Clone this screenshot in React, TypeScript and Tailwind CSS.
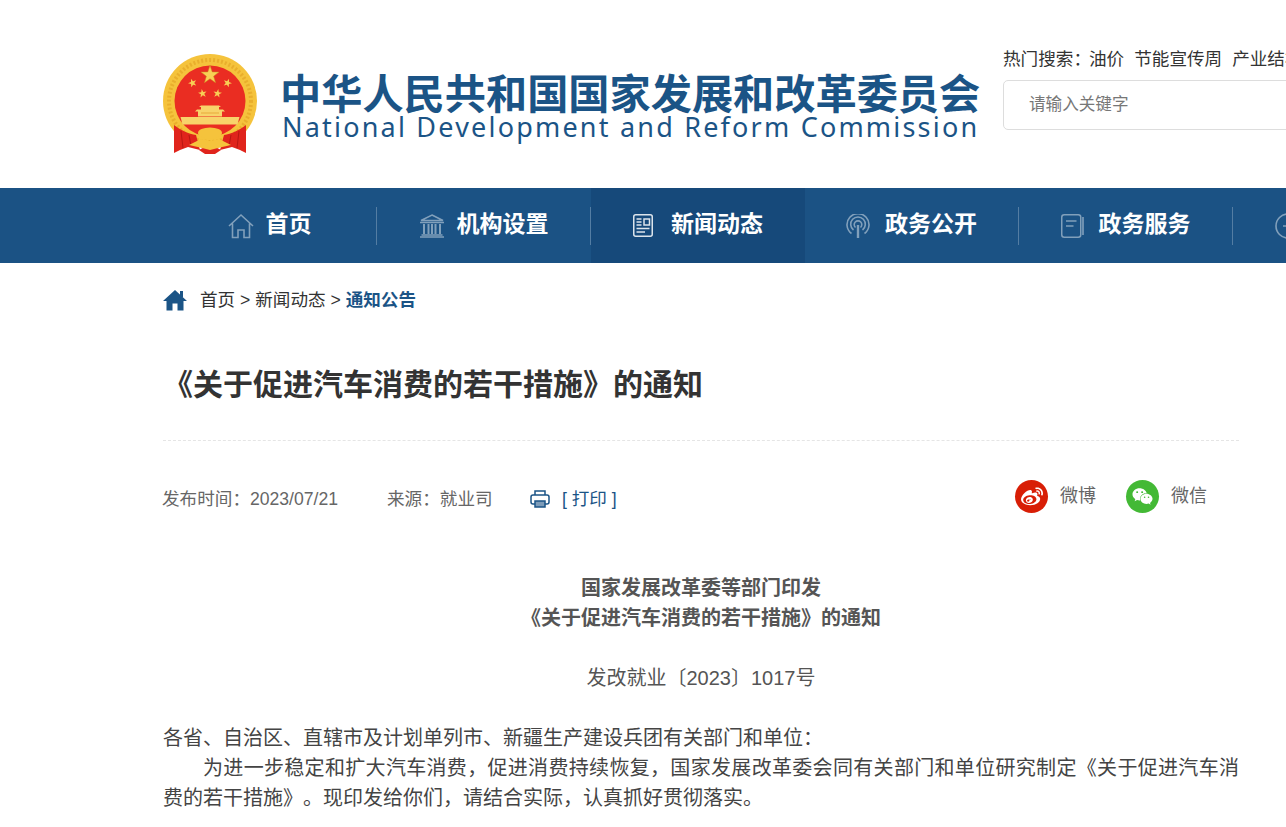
import React from 'react';
import { FaWeibo, FaWeixin } from 'react-icons/fa';

const FONT = '[font-family:"Liberation_Sans","Noto_Sans_CJK_SC",sans-serif]';

const star = (cx: number, cy: number, r: number, rot = 0) => {
  const pts: string[] = [];
  for (let i = 0; i < 10; i++) {
    const rad = i % 2 === 0 ? r : r * 0.4;
    const a = ((-90 + rot + i * 36) * Math.PI) / 180;
    pts.push(`${(cx + rad * Math.cos(a)).toFixed(2)},${(cy + rad * Math.sin(a)).toFixed(2)}`);
  }
  return pts.join(' ');
};

const Emblem = () => (
  <svg width="94" height="100" viewBox="0 0 94 100" className="shrink-0">
    <circle cx="47" cy="47" r="47" fill="#f5c33c" />
    <circle cx="47" cy="47" r="41" fill="none" stroke="#e9ae2c" strokeWidth="4" strokeDasharray="2 2" />
    <circle cx="47" cy="47" r="35.5" fill="#ea2d22" />
    <polygon points={star(47, 21, 9.5)} fill="#f8cf55" stroke="#c98a1f" strokeWidth="0.5" />
    <polygon points={star(29.5, 29, 4.5, -20)} fill="#f8cf55" />
    <polygon points={star(64.5, 29, 4.5, 20)} fill="#f8cf55" />
    <polygon points={star(39.5, 39.5, 4.5, -10)} fill="#f8cf55" />
    <polygon points={star(54.5, 39.5, 4.5, 10)} fill="#f8cf55" />
    <path d="M36 53 L38 51.5 H56 L58 53 H56 V55.5 H60 L62 57.5 H59 V62.5 H35 V57.5 H32 L34 55.5 H38 V53 Z" fill="#f8d36a" />
    <path d="M38 59 H56" stroke="#e8a93a" strokeWidth="1" />
    <path d="M17.5 63 H76.5 L74.5 70.5 H19.5 Z" fill="#f8d36a" />
    <path d="M11 71 C17 76 26 80 33 81 L37 96 L25 93 L17 96 L11 99 Z" fill="#e0241c" />
    <path d="M83 71 C77 76 68 80 61 81 L57 96 L69 93 L77 96 L83 99 Z" fill="#e0241c" />
    <path d="M18 77 L20 94 M26 81 L28 92 M76 77 L74 94 M68 81 L66 92" stroke="#b81712" strokeWidth="1" fill="none" />
    <path d="M36 96 L47 90 L58 96 L52 100 H42 Z" fill="#e0241c" />
    <ellipse cx="47" cy="79" rx="12" ry="5.5" fill="#f5c33c" />
    <path d="M26 91 L38 85 L47 87 L56 85 L68 91 L57 93.5 L47 96 L37 93.5 Z" fill="#f5c33c" />
  </svg>
);

const HomeIcon = () => (
  <svg width="26" height="26" viewBox="0 0 26 26" fill="none" stroke="currentColor" strokeWidth="1.6">
    <path d="M1 13 L13 2 L25 13 M4.5 10.5 V24.5 H10 V17 H16 V24.5 H21.5 V10.5" />
  </svg>
);
const BankIcon = () => (
  <svg width="26" height="24" viewBox="0 0 26 24" fill="none" stroke="currentColor">
    <path d="M13 1 L24 6.5 H2 Z" strokeWidth="1.5" />
    <path d="M1 8.5 H25 M2.5 21 H23.5 M1 23 H25" strokeWidth="1.4" />
    <path d="M5 10 V20 M9.5 10 V20 M13 10 V20 M16.5 10 V20 M21 10 V20" strokeWidth="2" />
  </svg>
);
const NewsIcon = () => (
  <svg width="20" height="23" viewBox="0 0 20 23" fill="none" stroke="currentColor" strokeWidth="1.5">
    <rect x="0.75" y="0.75" width="18.5" height="21.5" rx="2" />
    <rect x="11" y="5" width="5.5" height="6" />
    <path d="M3.5 5 H8.5 M3.5 8 H8.5 M3.5 11 H8.5 M3.5 14.5 H16.5 M3.5 18 H12" />
  </svg>
);
const SignalIcon = () => (
  <svg width="24" height="24" viewBox="0 0 24 24" fill="none" stroke="currentColor" strokeWidth="1.6">
    <path d="M5.5 19.5 A11 11 0 1 1 18.5 19.5" />
    <path d="M7.5 16 A7.3 7.3 0 1 1 16.5 16" />
    <path d="M9.5 13.5 A3.8 3.8 0 1 1 14.5 13.5" />
    <path d="M12 11 V24" strokeWidth="2.4" />
  </svg>
);
const BookIcon = () => (
  <svg width="23" height="24" viewBox="0 0 23 24" fill="none" stroke="currentColor" strokeWidth="1.5">
    <rect x="0.75" y="0.75" width="19" height="22.5" rx="2.5" />
    <path d="M5 7 H15.5 M5 12 H12.5" />
    <path d="M22 3 V21" strokeWidth="1.6" />
  </svg>
);
const CircleIcon = () => (
  <svg width="26" height="26" viewBox="0 0 26 26" fill="none" stroke="currentColor" strokeWidth="1.6">
    <circle cx="13" cy="13" r="12" />
    <path d="M8 13 H18 M13 8 V18" />
  </svg>
);

const NAV = [
  { label: '首页', icon: <HomeIcon />, gap: 'gap-3' },
  { label: '机构设置', icon: <BankIcon />, gap: 'gap-3' },
  { label: '新闻动态', icon: <NewsIcon />, gap: 'gap-[18px]', active: true },
  { label: '政务公开', icon: <SignalIcon />, gap: 'gap-[15px]' },
  { label: '政务服务', icon: <BookIcon />, gap: 'gap-[15px]' },
  { label: '互动交流', icon: <CircleIcon />, gap: 'gap-3' },
];

export default function App() {
  return (
    <div className={`h-[827px] w-[1286px] overflow-hidden bg-white text-[#333] ${FONT}`}>
      {/* Header */}
      <header className="flex h-[188px] pl-[163px]">
        <div className="mt-[54px] flex w-[840px] shrink-0 items-start gap-[23px]">
          <Emblem />
          <div className="w-[720px] shrink-0">
            <div className="mt-[16px] h-[43px] whitespace-nowrap text-[41.2px] leading-[43px] font-bold text-[#1b5486] [font-family:'Noto_Sans_CJK_SC',sans-serif]">
              中华人民共和国国家发展和改革委员会
            </div>
            <div className="whitespace-nowrap pl-[2px] text-[27px] leading-[28px] tracking-[2.2px] text-[#1b5486] [font-family:'Noto_Sans',sans-serif]">
              National Development and Reform Commission
            </div>
          </div>
        </div>
        <div className="mt-[46px] w-[400px] shrink-0">
          <div className="flex h-[26px] items-center gap-[10px] whitespace-nowrap text-[17.6px] leading-[26px] text-[#333]">
            <span>
              <span className="mr-[-2px]">热门搜索：</span>油价
            </span>
            <span>节能宣传周</span>
            <span>产业结构</span>
          </div>
          <div className="mt-2 flex h-[50px] items-center rounded-[5px] border border-[#ddd] pl-[25px] text-[16.6px] text-[#777]">
            请输入关键字
          </div>
        </div>
      </header>

      {/* Nav */}
      <nav className="flex h-[75px] bg-[#1b5284] pl-[163px]">
        {NAV.map(item => (
          <div
            key={item.label}
            className={`flex h-full w-[214px] shrink-0 items-center ${item.active ? 'bg-[#16497a]' : ''}`}
          >
            <div className={`flex flex-1 items-center justify-center ${item.gap} ${item.active ? 'text-white/85' : 'text-white/45'}`}>
              {item.icon}
              <span className="pb-[2px] text-[23px] font-bold whitespace-nowrap text-white">{item.label}</span>
            </div>
            {!item.active && <div className="h-[38px] w-px bg-white/25" />}
          </div>
        ))}
      </nav>

      <main className="ml-[163px] w-[1076px]">
        {/* Breadcrumb */}
        <div className="flex h-[74px] items-center text-[17.6px]">
          <svg width="24" height="22" viewBox="0 0 24 22" fill="#1b5486" className="mr-[13px] shrink-0">
            <path d="M12 1 L24 12 H20.5 V21.5 H14.5 V14.5 H9.5 V21.5 H3.5 V12 H0 Z" />
            <rect x="17" y="2" width="3" height="6" />
          </svg>
          <span>首页 &gt; 新闻动态 &gt;&nbsp;</span>
          <span className="font-bold text-[#1b5486]">通知公告</span>
        </div>

        {/* Title */}
        <h1 className="flex h-[104px] items-start border-b border-dashed border-[#e5e5e5] pt-[27px] text-[30px] leading-[42px] font-bold text-[#333]">
          《关于促进汽车消费的若干措施》的通知
        </h1>

        {/* Meta row */}
        <div className="flex h-[115px] items-center justify-between pt-[2px] text-[17.6px] text-[#666]">
          <div className="ml-[-1px] flex items-center">
            <span className="w-[225px] whitespace-nowrap">发布时间：2023/07/21</span>
            <span className="w-[143px] whitespace-nowrap">来源：就业司</span>
            <svg width="20" height="18" viewBox="0 0 20 18" fill="none" stroke="#1b5486" strokeWidth="1.5" className="mr-[12px]">
              <path d="M5 5 V1 H15 V5" />
              <rect x="1" y="5" width="18" height="9" rx="2" />
              <path d="M5 11 H15 V17 H5 Z" fill="#7d9cb9" />
            </svg>
            <span className="whitespace-nowrap text-[#1b5486]">[ 打印 ]</span>
          </div>
          <div className="mb-[6px] mr-[32px] flex items-center text-[18px]">
            <span className="flex h-[33px] w-[33px] items-center justify-center rounded-full bg-[#d81e06] text-[22px] text-white">
              <FaWeibo />
            </span>
            <span className="ml-3 w-[66px]">微博</span>
            <span className="flex h-[33px] w-[33px] items-center justify-center rounded-full bg-[#43b935] text-[21px] text-white">
              <FaWeixin />
            </span>
            <span className="ml-3">微信</span>
          </div>
        </div>

        {/* Article */}
        <article className="pt-[17px] text-[20px] leading-[30px] text-[#444] [text-spacing-trim:space-all]">
          <p className="text-center font-bold text-[#555]">国家发展改革委等部门印发</p>
          <p className="text-center font-bold text-[#555]">《关于促进汽车消费的若干措施》的通知</p>
          <p className="mt-[30px] text-center text-[#555]">发改就业〔2023〕1017号</p>
          <p className="mt-[30px]">各省、自治区、直辖市及计划单列市、新疆生产建设兵团有关部门和单位：</p>
          <p className="text-justify indent-[40px]">
            为进一步稳定和扩大汽车消费，促进消费持续恢复，国家发展改革委会同有关部门和单位研究制定《关于促进汽车消费的若干措施》。现印发给你们，请结合实际，认真抓好贯彻落实。
          </p>
        </article>
      </main>
    </div>
  );
}
